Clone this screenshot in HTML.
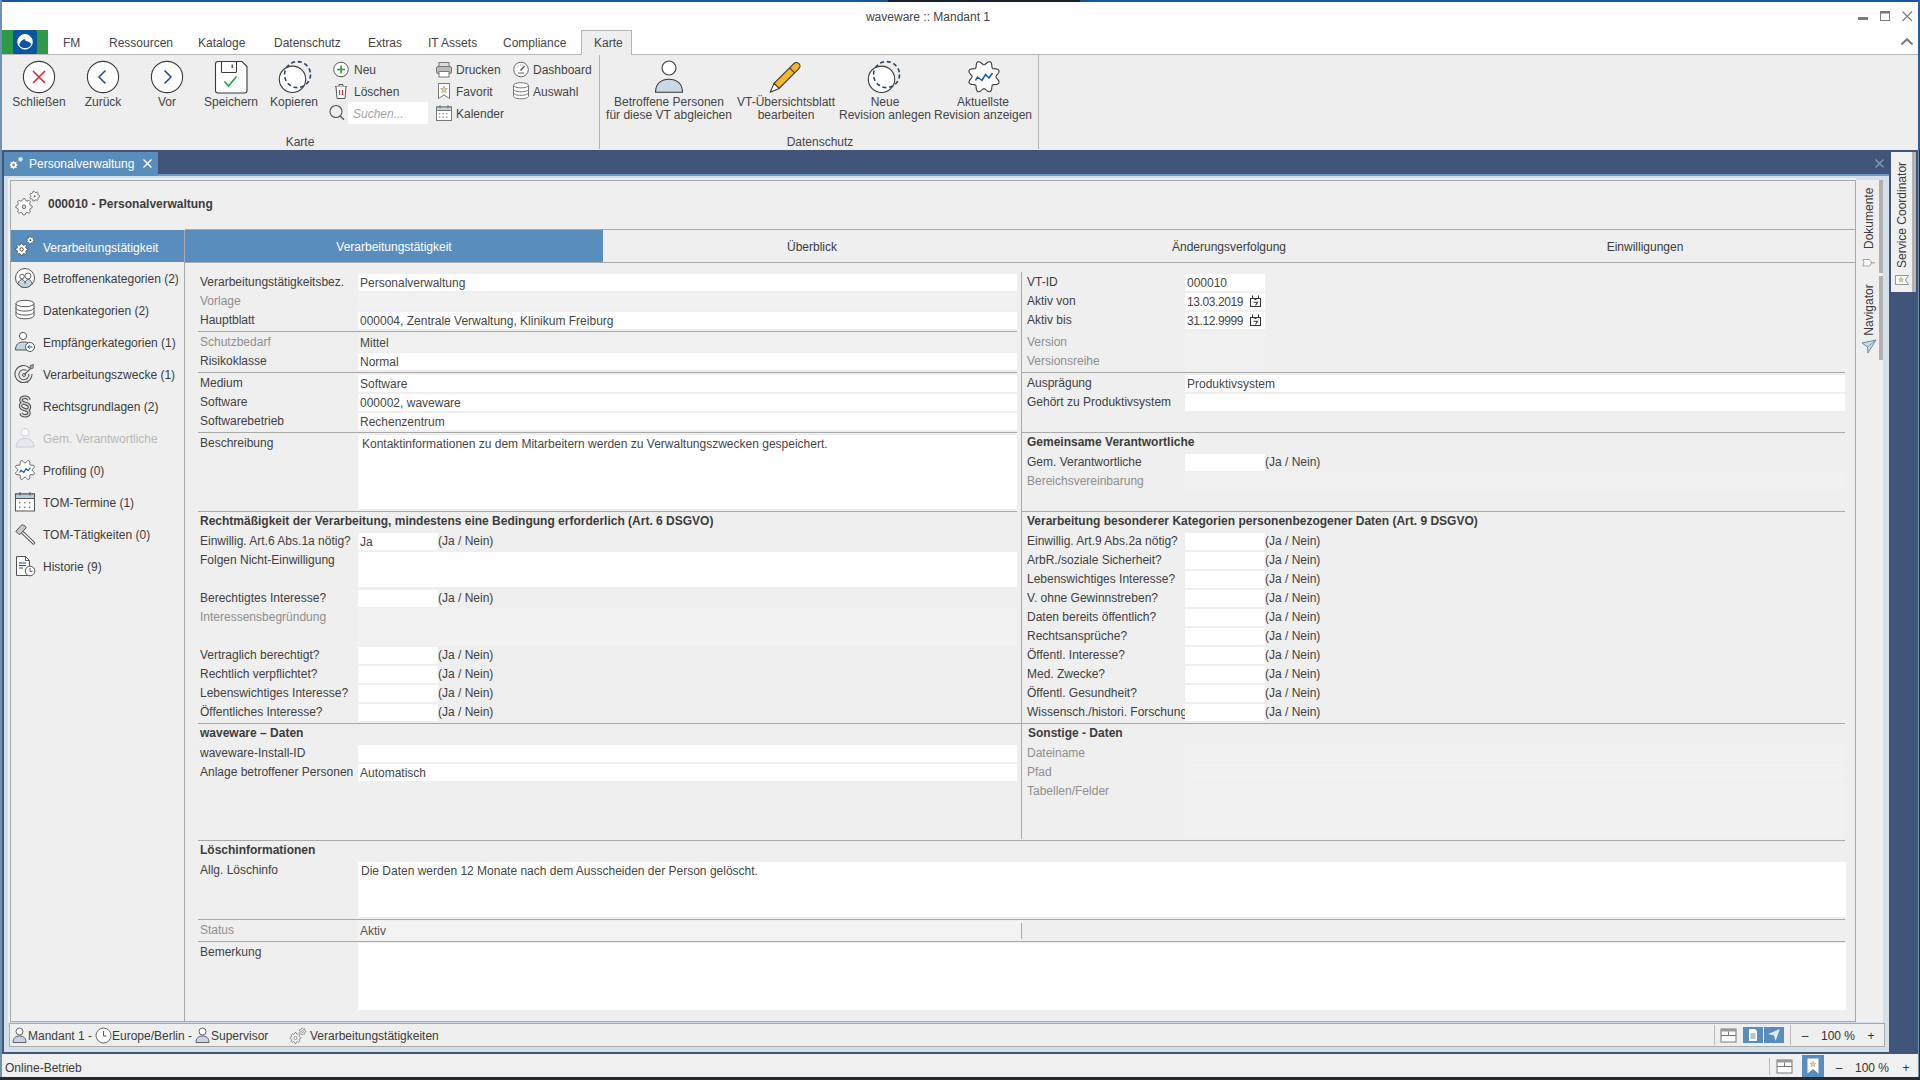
<!DOCTYPE html>
<html><head><meta charset="utf-8"><title>waveware</title>
<style>
html,body{margin:0;padding:0;}
body{width:1920px;height:1080px;position:relative;overflow:hidden;background:#efefef;font-family:"Liberation Sans",sans-serif;}
.a{position:absolute;}
.t{position:absolute;font-size:12px;line-height:14px;white-space:nowrap;color:#3b3b3b;}
.b{font-weight:bold;}
.dis{color:#8e8e8e;}
</style></head><body>
<div class="a" style="left:0px;top:0px;width:1920px;height:1080px;background:#41557a;"></div>
<div class="a" style="left:0px;top:0px;width:1920px;height:54px;background:#ffffff;"></div>
<div class="a" style="left:0px;top:54px;width:1920px;height:96px;background:#eeeeee;"></div>
<div class="a" style="left:0px;top:54px;width:1918px;height:1px;background:#b9b9b9;"></div>
<div class="a" style="left:0px;top:0px;width:1920px;height:2px;background:#1a5599;"></div>
<div class="a" style="left:888px;top:0px;width:192px;height:2px;background:#15202e;"></div>
<div class="a" style="left:1918px;top:0px;width:2px;height:150px;background:#1f60ae;"></div>
<div class="a" style="left:0px;top:0px;width:2px;height:1080px;background:#6e93b0;"></div>
<div class="a" style="left:1918px;top:150px;width:1px;height:930px;background:#7290a8;"></div>
<div class="a" style="left:1919px;top:150px;width:1px;height:930px;background:#1e2f3f;"></div>
<div class="a" style="left:4px;top:176px;width:1885px;height:876px;background:#d5dfe8;"></div>
<div class="a" style="left:8px;top:178px;width:3px;height:844px;background:#eef1ef;"></div>
<div class="a" style="left:8px;top:178px;width:1848px;height:2px;background:#eceff0;"></div>
<div class="a" style="left:158px;top:174px;width:1731px;height:2px;background:#6d9cc9;"></div>
<div class="a" style="left:10px;top:180px;width:1846px;height:842px;background:#efefef;box-sizing:border-box;border:1px solid #a9a9a9;"></div>
<div class="a" style="left:1856px;top:180px;width:27px;height:842px;background:#efefef;"></div>
<div class="a" style="left:9px;top:1023px;width:1876px;height:24px;background:#efefef;box-sizing:border-box;border:1px solid #a9a9a9;"></div>
<div class="a" style="left:2px;top:1052px;width:1916px;height:2px;background:#41557a;"></div>
<div class="a" style="left:2px;top:1054px;width:1916px;height:23px;background:#f0f0f0;"></div>
<div class="a" style="left:0px;top:1077px;width:1920px;height:3px;background:#262a30;"></div>
<div class="t " style="top:10px;left:628px;width:600px;text-align:center;color:#444;">waveware :: Mandant 1</div>
<div class="a" style="left:1858px;top:17px;width:10px;height:3px;background:#7a7a7a;"></div>
<svg class="a" style="left:1880px;top:11px;" width="11" height="11" viewBox="0 0 11 11"><rect x="0.5" y="0.5" width="9" height="9" fill="none" stroke="#7a7a7a" stroke-width="1"/><rect x="0.5" y="0.5" width="9" height="2" fill="#7a7a7a"/></svg>
<svg class="a" style="left:1902px;top:11px;" width="11" height="11" viewBox="0 0 11 11"><path d="M0.5 0.5L10 10M10 0.5L0.5 10" stroke="#7a7a7a" stroke-width="1.1"/></svg>
<svg class="a" style="left:1900px;top:37px;" width="14" height="9" viewBox="0 0 14 9"><path d="M1.5 7.5L7 2.2L12.5 7.5" stroke="#7a7a7a" stroke-width="2" fill="none"/></svg>
<div class="a" style="left:2px;top:30px;width:46px;height:24px;background:#2e9a46;"></div>
<div class="a" style="left:13px;top:30px;width:24px;height:24px;background:#0a55a0;border-radius:2px;"></div>
<svg class="a" style="left:13px;top:30px;" width="24" height="24" viewBox="0 0 24 24"><circle cx="12" cy="11.8" r="7.3" fill="#fff"/><path d="M6.3 15.2C6.8 12.2 8.8 9.6 11.2 9.3C12.6 9.1 13.2 10.6 12 11.2C13.8 10.6 15.6 11.8 18.6 14.2C17.6 16.4 15.6 18 13.2 18.1L12 18.1C9.5 18 7.3 16.9 6.3 15.2Z" fill="#0a55a0"/><circle cx="12" cy="11.8" r="7.3" fill="none" stroke="#fff" stroke-width="1"/></svg>
<div class="t " style="top:36px;left:63px;color:#444;">FM</div>
<div class="t " style="top:36px;left:109px;color:#444;">Ressourcen</div>
<div class="t " style="top:36px;left:198px;color:#444;">Kataloge</div>
<div class="t " style="top:36px;left:274px;color:#444;">Datenschutz</div>
<div class="t " style="top:36px;left:368px;color:#444;">Extras</div>
<div class="t " style="top:36px;left:428px;color:#444;">IT Assets</div>
<div class="t " style="top:36px;left:503px;color:#444;">Compliance</div>
<div class="a" style="left:581px;top:30px;width:51px;height:25px;background:#eeeeee;box-sizing:border-box;border:1px solid #b4b4b4;border-bottom:none;"></div>
<div class="t " style="top:36px;left:594px;color:#444;">Karte</div>
<div class="a" style="left:599px;top:55px;width:1px;height:94px;background:#b4b4b4;"></div>
<div class="a" style="left:1038px;top:55px;width:1px;height:94px;background:#b4b4b4;"></div>
<div class="t " style="top:135px;left:0px;width:600px;text-align:center;color:#444;">Karte</div>
<div class="t " style="top:135px;left:520px;width:600px;text-align:center;color:#444;">Datenschutz</div>
<div class="t " style="top:95px;left:-261px;width:600px;text-align:center;color:#444;">Schließen</div>
<div class="t " style="top:95px;left:-197px;width:600px;text-align:center;color:#444;">Zurück</div>
<div class="t " style="top:95px;left:-133px;width:600px;text-align:center;color:#444;">Vor</div>
<div class="t " style="top:95px;left:-69px;width:600px;text-align:center;color:#444;">Speichern</div>
<div class="t " style="top:95px;left:-6px;width:600px;text-align:center;color:#444;">Kopieren</div>
<svg class="a" style="left:22px;top:60px;" width="34" height="34" viewBox="0 0 34 34"><circle cx="17" cy="17" r="15.6" fill="#fff" stroke="#3a3a3a" stroke-width="1.1"/><path d="M11 11L23 23M23 11L11 23" stroke="#e3212b" stroke-width="1.5"/></svg>
<svg class="a" style="left:86px;top:60px;" width="34" height="34" viewBox="0 0 34 34"><circle cx="17" cy="17" r="15.6" fill="#fff" stroke="#3a3a3a" stroke-width="1.1"/><path d="M19.5 10.5L13 17L19.5 23.5" stroke="#1d4f8a" stroke-width="1.5" fill="none"/></svg>
<svg class="a" style="left:150px;top:60px;" width="34" height="34" viewBox="0 0 34 34"><circle cx="17" cy="17" r="15.6" fill="#fff" stroke="#3a3a3a" stroke-width="1.1"/><path d="M14.5 10.5L21 17L14.5 23.5" stroke="#1d4f8a" stroke-width="1.5" fill="none"/></svg>
<svg class="a" style="left:214px;top:60px;" width="34" height="34" viewBox="0 0 34 34"><path d="M1.5 4Q1.5 1.5 4 1.5H28L33 6.5V30.5Q33 33 30.5 33H4Q1.5 33 1.5 30.5Z" fill="#fff" stroke="#3a3a3a" stroke-width="1.1"/><path d="M7.5 1.5V11.5Q7.5 12.5 8.5 12.5H21.5Q22.5 12.5 22.5 11.5V1.5" fill="none" stroke="#3a3a3a" stroke-width="1.1"/><rect x="17.5" y="4.5" width="1.6" height="3.5" fill="#555"/><path d="M10.5 21.5L14.5 26L22.5 16.5" stroke="#1aa33a" stroke-width="1.5" fill="none"/></svg>
<svg class="a" style="left:277px;top:60px;" width="36" height="36" viewBox="0 0 36 36"><circle cx="15.5" cy="19.3" r="13.2" fill="#fff" stroke="#3a3a3a" stroke-width="1.1"/><circle cx="20.5" cy="14.6" r="13" fill="none" stroke="#23466e" stroke-width="1.6" stroke-dasharray="4 2.8"/></svg>
<div class="t " style="top:63px;left:354px;color:#444;">Neu</div>
<div class="t " style="top:85px;left:354px;color:#444;">Löschen</div>
<div class="a" style="left:348px;top:102px;width:80px;height:22px;background:#ffffff;"></div>
<div class="t " style="top:107px;left:353px;color:#a5a5a5;font-style:italic;">Suchen...</div>
<div class="t " style="top:63px;left:456px;color:#444;">Drucken</div>
<div class="t " style="top:85px;left:456px;color:#444;">Favorit</div>
<div class="t " style="top:107px;left:456px;color:#444;">Kalender</div>
<div class="t " style="top:63px;left:533px;color:#444;">Dashboard</div>
<div class="t " style="top:85px;left:533px;color:#444;">Auswahl</div>
<svg class="a" style="left:332px;top:61px;" width="18" height="18" viewBox="0 0 18 18"><circle cx="9" cy="8.5" r="7.3" fill="#fff" stroke="#555" stroke-width="1"/><path d="M9 4.5V12.5M5 8.5H13" stroke="#2a9a3a" stroke-width="1.6"/></svg>
<svg class="a" style="left:332px;top:82px;" width="18" height="18" viewBox="0 0 18 18"><path d="M3 4.5H15M7 4.5V2.5H11V4.5" stroke="#555" fill="none" stroke-width="1"/><path d="M4 4.5L5 16.5H13L14 4.5" fill="#fff" stroke="#555" stroke-width="1"/><path d="M7.5 8V13M10.5 8V13" stroke="#d0303a" stroke-width="1.2"/></svg>
<svg class="a" style="left:328px;top:104px;" width="20" height="20" viewBox="0 0 20 20"><circle cx="8" cy="7.5" r="6" fill="none" stroke="#555" stroke-width="1.1"/><path d="M12.3 12L16 15.8" stroke="#555" stroke-width="1.3"/></svg>
<svg class="a" style="left:435px;top:61px;" width="18" height="18" viewBox="0 0 18 18"><rect x="4" y="1.5" width="10" height="4" fill="#ddd" stroke="#777" stroke-width="1"/><rect x="1.5" y="5.5" width="15" height="7" rx="1.5" fill="#bbb" stroke="#777" stroke-width="1"/><rect x="4" y="10.5" width="10" height="5.5" fill="#fff" stroke="#777" stroke-width="1"/></svg>
<svg class="a" style="left:436px;top:82px;" width="18" height="18" viewBox="0 0 18 18"><path d="M2.5 1.5H13.5V16.5L8 13L2.5 16.5Z" fill="#fff" stroke="#777" stroke-width="1"/><path d="M8 4.2L9 6.6L11.4 6.7L9.5 8.2L10.2 10.6L8 9.3L5.8 10.6L6.5 8.2L4.6 6.7L7 6.6Z" fill="#e8d9a0" stroke="#9a8b50" stroke-width="0.6"/></svg>
<svg class="a" style="left:435px;top:104px;" width="18" height="18" viewBox="0 0 18 18"><rect x="1.5" y="3" width="15" height="13.5" fill="#fff" stroke="#777" stroke-width="1"/><rect x="1.5" y="3" width="15" height="3.5" fill="#c5d4e3" stroke="#777" stroke-width="1"/><path d="M5 1V4.5M13 1V4.5" stroke="#777" stroke-width="1"/><g fill="#888"><rect x="4" y="9" width="1.3" height="1.3"/><rect x="7.5" y="9" width="1.3" height="1.3"/><rect x="11" y="9" width="1.3" height="1.3"/><rect x="4" y="12.5" width="1.3" height="1.3"/><rect x="7.5" y="12.5" width="1.3" height="1.3"/><rect x="11" y="12.5" width="1.3" height="1.3"/></g></svg>
<svg class="a" style="left:512px;top:61px;" width="18" height="18" viewBox="0 0 18 18"><circle cx="9" cy="8.5" r="7.3" fill="#fff" stroke="#666" stroke-width="1"/><path d="M6 12H12" stroke="#666" stroke-width="1"/><path d="M8.5 9.5L12.5 5" stroke="#555" stroke-width="1.4"/><path d="M5 6.5A4.5 4.5 0 0 1 12 4.8" fill="none" stroke="#888" stroke-width="0.8" stroke-dasharray="1 1"/></svg>
<svg class="a" style="left:512px;top:82px;" width="18" height="18" viewBox="0 0 18 18"><path d="M1.5 3.3V14.2C1.5 15.6 4.8 16.8 9 16.8S16.5 15.6 16.5 14.2V3.3" fill="#fff" stroke="#777" stroke-width="1"/><path d="M1.5 7.2C1.5 8.6 4.8 9.8 9 9.8S16.5 8.6 16.5 7.2M1.5 10.7C1.5 12.1 4.8 13.3 9 13.3S16.5 12.1 16.5 10.7" fill="none" stroke="#777" stroke-width="1"/><ellipse cx="9" cy="3.3" rx="7.5" ry="2.6" fill="#fff" stroke="#777" stroke-width="1"/></svg>
<div class="t " style="top:95px;left:369px;width:600px;text-align:center;color:#444;">Betroffene Personen</div>
<div class="t " style="top:108px;left:369px;width:600px;text-align:center;color:#444;">für diese VT abgleichen</div>
<div class="t " style="top:95px;left:486px;width:600px;text-align:center;color:#444;">VT-Übersichtsblatt</div>
<div class="t " style="top:108px;left:486px;width:600px;text-align:center;color:#444;">bearbeiten</div>
<div class="t " style="top:95px;left:585px;width:600px;text-align:center;color:#444;">Neue</div>
<div class="t " style="top:108px;left:585px;width:600px;text-align:center;color:#444;">Revision anlegen</div>
<div class="t " style="top:95px;left:683px;width:600px;text-align:center;color:#444;">Aktuellste</div>
<div class="t " style="top:108px;left:683px;width:600px;text-align:center;color:#444;">Revision anzeigen</div>
<svg class="a" style="left:652px;top:58px;" width="34" height="36" viewBox="0 0 34 36"><circle cx="17" cy="10" r="7" fill="#fff" stroke="#3a3a3a" stroke-width="1.1"/><path d="M3.5 34.3C3.5 25.5 9.5 21.2 17 21.2S30.5 25.5 30.5 34.3Z" fill="#c9d9e6" stroke="#3a3a3a" stroke-width="1.1"/></svg>
<svg class="a" style="left:760px;top:54px;" width="44" height="44" viewBox="0 0 44 44"><g transform="translate(10.2,38.3) rotate(-45)"><path d="M9 -3.6H37A3.6 3.6 0 0 1 37 3.6H9Z" fill="#f7b52c" stroke="#3a3a3a" stroke-width="1.1"/><path d="M0 0L9 -3.6V3.6Z" fill="#fff" stroke="#3a3a3a" stroke-width="1.1" stroke-linejoin="round"/><path d="M31 -3.6V3.6" stroke="#3a3a3a" stroke-width="1.1"/></g></svg>
<svg class="a" style="left:866px;top:60px;" width="36" height="36" viewBox="0 0 36 36"><circle cx="15.5" cy="19.3" r="13.2" fill="#fff" stroke="#3a3a3a" stroke-width="1.1"/><circle cx="20.5" cy="14.6" r="13" fill="none" stroke="#23466e" stroke-width="1.6" stroke-dasharray="4 2.8"/></svg>
<svg class="a" style="left:966px;top:59px;" width="36" height="36" viewBox="0 0 36 36"><path d="M29.90 17.70L29.99 18.17L30.26 18.67L30.68 19.20L31.19 19.79L31.73 20.43L32.24 21.12L32.66 21.84L32.93 22.55L33.01 23.24L32.87 23.86L32.53 24.40L31.99 24.83L31.29 25.14L30.49 25.35L29.64 25.48L28.80 25.55L28.03 25.60L27.35 25.69L26.81 25.85L26.41 26.11L26.15 26.51L25.99 27.05L25.90 27.73L25.85 28.50L25.78 29.34L25.65 30.19L25.44 30.99L25.13 31.69L24.70 32.23L24.16 32.57L23.54 32.71L22.85 32.63L22.14 32.36L21.42 31.94L20.73 31.43L20.09 30.89L19.50 30.38L18.97 29.96L18.47 29.69L18.00 29.60L17.53 29.69L17.03 29.96L16.50 30.38L15.91 30.89L15.27 31.43L14.58 31.94L13.86 32.36L13.15 32.63L12.46 32.71L11.84 32.57L11.30 32.23L10.87 31.69L10.56 30.99L10.35 30.19L10.22 29.34L10.15 28.50L10.10 27.73L10.01 27.05L9.85 26.51L9.59 26.11L9.19 25.85L8.65 25.69L7.97 25.60L7.20 25.55L6.36 25.48L5.51 25.35L4.71 25.14L4.01 24.83L3.47 24.40L3.13 23.86L2.99 23.24L3.07 22.55L3.34 21.84L3.76 21.12L4.27 20.43L4.81 19.79L5.32 19.20L5.74 18.67L6.01 18.17L6.10 17.70L6.01 17.23L5.74 16.73L5.32 16.20L4.81 15.61L4.27 14.97L3.76 14.28L3.34 13.56L3.07 12.85L2.99 12.16L3.13 11.54L3.47 11.00L4.01 10.57L4.71 10.26L5.51 10.05L6.36 9.92L7.20 9.85L7.97 9.80L8.65 9.71L9.19 9.55L9.59 9.29L9.85 8.89L10.01 8.35L10.10 7.67L10.15 6.90L10.22 6.06L10.35 5.21L10.56 4.41L10.87 3.71L11.30 3.17L11.84 2.83L12.46 2.69L13.15 2.77L13.86 3.04L14.58 3.46L15.27 3.97L15.91 4.51L16.50 5.02L17.03 5.44L17.53 5.71L18.00 5.80L18.47 5.71L18.97 5.44L19.50 5.02L20.09 4.51L20.73 3.97L21.42 3.46L22.14 3.04L22.85 2.77L23.54 2.69L24.16 2.83L24.70 3.17L25.13 3.71L25.44 4.41L25.65 5.21L25.78 6.06L25.85 6.90L25.90 7.67L25.99 8.35L26.15 8.89L26.41 9.29L26.81 9.55L27.35 9.71L28.03 9.80L28.80 9.85L29.64 9.92L30.49 10.05L31.29 10.26L31.99 10.57L32.53 11.00L32.87 11.54L33.01 12.16L32.93 12.85L32.66 13.56L32.24 14.28L31.73 14.97L31.19 15.61L30.68 16.20L30.26 16.73L29.99 17.23Z" fill="#fff" stroke="#3a3a3a" stroke-width="1.1"/><path d="M9.5 21.5L11.5 18L16 21.5L19.5 15.5L23 19L26.5 14" stroke="#1d5a98" stroke-width="1.5" fill="none"/></svg>
<div class="a" style="left:4px;top:152px;width:154px;height:24px;background:#598dbe;"></div>
<svg class="a" style="left:8px;top:154px;" width="18" height="18" viewBox="0 0 18 18"><path d="M10.18 10.55L10.18 11.45L8.76 11.96L8.51 12.56L9.16 13.92L8.52 14.56L7.16 13.91L6.56 14.16L6.05 15.58L5.15 15.58L4.64 14.16L4.04 13.91L2.68 14.56L2.04 13.92L2.69 12.56L2.44 11.96L1.02 11.45L1.02 10.55L2.44 10.04L2.69 9.44L2.04 8.08L2.68 7.44L4.04 8.09L4.64 7.84L5.15 6.42L6.05 6.42L6.56 7.84L7.16 8.09L8.52 7.44L9.16 8.08L8.51 9.44L8.76 10.04Z" fill="#fff" stroke="#3a4a60" stroke-width="0.4"/><circle cx="5.6" cy="11" r="1.4" fill="#8a8a8a"/><path d="M15.08 5.01L15.08 5.59L14.20 5.89L14.02 6.26L14.34 7.14L13.88 7.50L13.09 7.00L12.70 7.09L12.21 7.88L11.64 7.75L11.54 6.82L11.23 6.57L10.30 6.68L10.05 6.16L10.71 5.50L10.71 5.10L10.05 4.44L10.30 3.92L11.23 4.03L11.54 3.78L11.64 2.85L12.21 2.72L12.70 3.51L13.09 3.60L13.88 3.10L14.34 3.46L14.02 4.34L14.20 4.71Z" fill="#dce8f4"/></svg>
<div class="t " style="top:157px;left:29px;color:#ffffff;">Personalverwaltung</div>
<svg class="a" style="left:142px;top:158px;" width="11" height="11" viewBox="0 0 11 11"><path d="M1.5 1.5L9.5 9.5M9.5 1.5L1.5 9.5" stroke="#fff" stroke-width="1.4"/></svg>
<svg class="a" style="left:1874px;top:158px;" width="11" height="11" viewBox="0 0 11 11"><path d="M1.5 1.5L9.5 9.5M9.5 1.5L1.5 9.5" stroke="#8a9ab5" stroke-width="1.3"/></svg>
<svg class="a" style="left:12px;top:188px;" width="32" height="30" viewBox="0 0 32 30"><path d="M20.16 18.00L20.16 19.60L18.12 20.66L17.64 21.82L18.34 24.00L17.20 25.14L15.02 24.44L13.86 24.92L12.80 26.96L11.20 26.96L10.14 24.92L8.98 24.44L6.80 25.14L5.66 24.00L6.36 21.82L5.88 20.66L3.84 19.60L3.84 18.00L5.88 16.94L6.36 15.78L5.66 13.60L6.80 12.46L8.98 13.16L10.14 12.68L11.20 10.64L12.80 10.64L13.86 12.68L15.02 13.16L17.20 12.46L18.34 13.60L17.64 15.78L18.12 16.94Z" fill="#fff" stroke="#666" stroke-width="0.9" stroke-linejoin="round"/><circle cx="12" cy="18.8" r="1.9" fill="#c8d4e0" stroke="#666" stroke-width="0.9"/><path d="M27.57 7.64L27.57 8.76L26.19 9.46L25.82 10.22L26.14 11.74L25.26 12.43L23.86 11.79L23.03 11.98L22.04 13.17L20.95 12.92L20.58 11.42L19.91 10.89L18.37 10.86L17.88 9.85L18.82 8.63L18.82 7.77L17.88 6.55L18.37 5.54L19.91 5.51L20.58 4.98L20.95 3.48L22.04 3.23L23.03 4.42L23.86 4.61L25.26 3.97L26.14 4.66L25.82 6.18L26.19 6.94Z" fill="#fff" stroke="#666" stroke-width="0.9" stroke-linejoin="round"/><circle cx="22.6" cy="8.2" r="1" fill="#666"/></svg>
<div class="t b" style="top:197px;left:48px;color:#3c3c3c;">000010 - Personalverwaltung</div>
<div class="a" style="left:11px;top:230px;width:173px;height:32px;background:#598dbe;"></div>
<div class="a" style="left:184px;top:230px;width:1px;height:791px;background:#a9a9a9;"></div>
<svg class="a" style="left:13px;top:234px;" width="24" height="24" viewBox="0 0 24 24"><path d="M14.77 14.79L14.77 16.01L13.00 16.74L12.66 17.57L13.39 19.33L12.53 20.19L10.77 19.46L9.94 19.80L9.21 21.57L7.99 21.57L7.26 19.80L6.43 19.46L4.67 20.19L3.81 19.33L4.54 17.57L4.20 16.74L2.43 16.01L2.43 14.79L4.20 14.06L4.54 13.23L3.81 11.47L4.67 10.61L6.43 11.34L7.26 11.00L7.99 9.23L9.21 9.23L9.94 11.00L10.77 11.34L12.53 10.61L13.39 11.47L12.66 13.23L13.00 14.06Z" fill="#fff" stroke="#3a3a3a" stroke-width="0.7" stroke-linejoin="round"/><circle cx="8.6" cy="15.4" r="1.7" fill="#fff" stroke="#3a3a3a" stroke-width="0.9"/><path d="M21.28 5.76L21.28 6.64L20.04 7.12L19.77 7.69L20.16 8.96L19.47 9.50L18.32 8.84L17.71 8.98L16.96 10.08L16.11 9.88L15.91 8.57L15.42 8.18L14.10 8.27L13.72 7.49L14.62 6.51L14.62 5.89L13.72 4.91L14.10 4.13L15.42 4.22L15.91 3.83L16.11 2.52L16.96 2.32L17.71 3.42L18.32 3.56L19.47 2.90L20.16 3.44L19.77 4.71L20.04 5.28Z" fill="#fff" stroke="#3a3a3a" stroke-width="0.6" stroke-linejoin="round"/><circle cx="17.4" cy="6.2" r="0.9" fill="#3a3a3a"/></svg>
<div class="t " style="top:241px;left:43px;color:#ffffff;">Verarbeitungstätigkeit</div>
<div class="t " style="top:272px;left:43px;color:#3b3b3b;white-space:pre;">Betroffenenkategorien (2)</div>
<div class="t " style="top:304px;left:43px;color:#3b3b3b;white-space:pre;">Datenkategorien (2)</div>
<div class="t " style="top:336px;left:43px;color:#3b3b3b;white-space:pre;">Empfängerkategorien (1)</div>
<div class="t " style="top:368px;left:43px;color:#3b3b3b;white-space:pre;">Verarbeitungszwecke (1)</div>
<div class="t " style="top:400px;left:43px;color:#3b3b3b;white-space:pre;">Rechtsgrundlagen (2)</div>
<div class="t " style="top:432px;left:43px;color:#b9b9b9;white-space:pre;">Gem. Verantwortliche</div>
<div class="t " style="top:464px;left:43px;color:#3b3b3b;white-space:pre;">Profiling (0)</div>
<div class="t " style="top:496px;left:43px;color:#3b3b3b;white-space:pre;">TOM-Termine (1)</div>
<div class="t " style="top:528px;left:43px;color:#3b3b3b;white-space:pre;">TOM-Tätigkeiten (0)</div>
<div class="t " style="top:560px;left:43px;color:#3b3b3b;white-space:pre;">Historie (9)</div>
<div class="a" style="left:185px;top:229px;width:1670px;height:1px;background:#a9a9a9;"></div>
<div class="a" style="left:185px;top:262px;width:1670px;height:1px;background:#a9a9a9;"></div>
<div class="a" style="left:185px;top:230px;width:418px;height:32px;background:#598dbe;"></div>
<div class="t " style="top:240px;left:94px;width:600px;text-align:center;color:#ffffff;">Verarbeitungstätigkeit</div>
<div class="t " style="top:240px;left:512px;width:600px;text-align:center;color:#3b3b3b;">Überblick</div>
<div class="t " style="top:240px;left:929px;width:600px;text-align:center;color:#3b3b3b;">Änderungsverfolgung</div>
<div class="t " style="top:240px;left:1345px;width:600px;text-align:center;color:#3b3b3b;">Einwilligungen</div>
<div class="t " style="top:275px;left:200px;color:#404040;">Verarbeitungstätigkeitsbez.</div>
<div class="a" style="left:358px;top:274px;width:659px;height:17px;background:#ffffff;"></div>
<div class="t " style="top:276px;left:360px;color:#464646;">Personalverwaltung</div>
<div class="t " style="top:294px;left:200px;color:#8e8e8e;">Vorlage</div>
<div class="a" style="left:358px;top:293px;width:659px;height:17px;background:#f1f1f1;"></div>
<div class="t " style="top:313px;left:200px;color:#404040;">Hauptblatt</div>
<div class="a" style="left:358px;top:312px;width:659px;height:17px;background:#ffffff;"></div>
<div class="t " style="top:314px;left:360px;color:#464646;">000004, Zentrale Verwaltung, Klinikum Freiburg</div>
<div class="a" style="left:198px;top:331px;width:819px;height:1px;background:#a9a9a9;"></div>
<div class="t " style="top:335px;left:200px;color:#8e8e8e;">Schutzbedarf</div>
<div class="a" style="left:358px;top:334px;width:659px;height:17px;background:#f1f1f1;"></div>
<div class="t " style="top:336px;left:360px;color:#464646;">Mittel</div>
<div class="t " style="top:354px;left:200px;color:#404040;">Risikoklasse</div>
<div class="a" style="left:358px;top:353px;width:659px;height:17px;background:#ffffff;"></div>
<div class="t " style="top:355px;left:360px;color:#464646;">Normal</div>
<div class="a" style="left:198px;top:372px;width:819px;height:1px;background:#a9a9a9;"></div>
<div class="t " style="top:376px;left:200px;color:#404040;">Medium</div>
<div class="a" style="left:358px;top:375px;width:659px;height:17px;background:#ffffff;"></div>
<div class="t " style="top:377px;left:360px;color:#464646;">Software</div>
<div class="t " style="top:395px;left:200px;color:#404040;">Software</div>
<div class="a" style="left:358px;top:394px;width:659px;height:17px;background:#ffffff;"></div>
<div class="t " style="top:396px;left:360px;color:#464646;">000002, waveware</div>
<div class="t " style="top:414px;left:200px;color:#404040;">Softwarebetrieb</div>
<div class="a" style="left:358px;top:413px;width:659px;height:17px;background:#ffffff;"></div>
<div class="t " style="top:415px;left:360px;color:#464646;">Rechenzentrum</div>
<div class="a" style="left:198px;top:432px;width:819px;height:1px;background:#a9a9a9;"></div>
<div class="t " style="top:436px;left:200px;color:#404040;">Beschreibung</div>
<div class="a" style="left:358px;top:435px;width:659px;height:74px;background:#ffffff;"></div>
<div class="t " style="top:437px;left:362px;color:#464646;">Kontaktinformationen zu dem Mitarbeitern werden zu Verwaltungszwecken gespeichert.</div>
<div class="a" style="left:198px;top:511px;width:819px;height:1px;background:#a9a9a9;"></div>
<div class="t b" style="top:514px;left:200px;color:#3b3b3b;">Rechtmäßigkeit der Verarbeitung, mindestens eine Bedingung erforderlich (Art. 6 DSGVO)</div>
<div class="t " style="top:534px;left:200px;color:#404040;">Einwillig. Art.6 Abs.1a nötig?</div>
<div class="a" style="left:358px;top:533px;width:80px;height:17px;background:#ffffff;"></div>
<div class="t " style="top:535px;left:360px;color:#464646;">Ja</div>
<div class="t " style="top:534px;left:438px;color:#404040;">(Ja / Nein)</div>
<div class="t " style="top:553px;left:200px;color:#404040;">Folgen Nicht-Einwilligung</div>
<div class="a" style="left:358px;top:552px;width:659px;height:35px;background:#ffffff;"></div>
<div class="t " style="top:591px;left:200px;color:#404040;">Berechtigtes Interesse?</div>
<div class="a" style="left:358px;top:590px;width:80px;height:17px;background:#ffffff;"></div>
<div class="t " style="top:591px;left:438px;color:#404040;">(Ja / Nein)</div>
<div class="t " style="top:610px;left:200px;color:#8e8e8e;">Interessensbegründung</div>
<div class="a" style="left:358px;top:608px;width:659px;height:38px;background:#f2f2f2;"></div>
<div class="t " style="top:648px;left:200px;color:#404040;">Vertraglich berechtigt?</div>
<div class="a" style="left:358px;top:647px;width:80px;height:17px;background:#ffffff;"></div>
<div class="t " style="top:648px;left:438px;color:#404040;">(Ja / Nein)</div>
<div class="t " style="top:667px;left:200px;color:#404040;">Rechtlich verpflichtet?</div>
<div class="a" style="left:358px;top:666px;width:80px;height:17px;background:#ffffff;"></div>
<div class="t " style="top:667px;left:438px;color:#404040;">(Ja / Nein)</div>
<div class="t " style="top:686px;left:200px;color:#404040;">Lebenswichtiges Interesse?</div>
<div class="a" style="left:358px;top:685px;width:80px;height:17px;background:#ffffff;"></div>
<div class="t " style="top:686px;left:438px;color:#404040;">(Ja / Nein)</div>
<div class="t " style="top:705px;left:200px;color:#404040;">Öffentliches Interesse?</div>
<div class="a" style="left:358px;top:704px;width:80px;height:17px;background:#ffffff;"></div>
<div class="t " style="top:705px;left:438px;color:#404040;">(Ja / Nein)</div>
<div class="a" style="left:198px;top:723px;width:823px;height:1px;background:#a9a9a9;"></div>
<div class="t b" style="top:726px;left:200px;color:#3b3b3b;">waveware – Daten</div>
<div class="t " style="top:746px;left:200px;color:#404040;">waveware-Install-ID</div>
<div class="a" style="left:358px;top:745px;width:659px;height:17px;background:#ffffff;"></div>
<div class="t " style="top:765px;left:200px;color:#404040;">Anlage betroffener Personen</div>
<div class="a" style="left:358px;top:764px;width:659px;height:17px;background:#ffffff;"></div>
<div class="t " style="top:766px;left:360px;color:#464646;">Automatisch</div>
<div class="a" style="left:1021px;top:272px;width:1px;height:567px;background:#a9a9a9;"></div>
<div class="t " style="top:275px;left:1027px;color:#404040;">VT-ID</div>
<div class="a" style="left:1185px;top:274px;width:80px;height:17px;background:#ffffff;"></div>
<div class="t " style="top:276px;left:1187px;color:#464646;">000010</div>
<div class="t " style="top:294px;left:1027px;color:#404040;">Aktiv von</div>
<div class="a" style="left:1185px;top:293px;width:80px;height:17px;background:#ffffff;"></div>
<div class="t " style="top:295px;left:1187px;color:#464646;letter-spacing:-0.4px;">13.03.2019</div>
<div class="t " style="top:313px;left:1027px;color:#404040;">Aktiv bis</div>
<div class="a" style="left:1185px;top:312px;width:80px;height:17px;background:#ffffff;"></div>
<div class="t " style="top:314px;left:1187px;color:#464646;letter-spacing:-0.4px;">31.12.9999</div>
<svg class="a" style="left:1250px;top:295px;" width="11" height="13" viewBox="0 0 11 13"><path d="M2.5 0.5V4.5M8.5 0.5V4.5" stroke="#333" stroke-width="1"/><rect x="0.5" y="3.5" width="10" height="8" fill="#fff" stroke="#333" stroke-width="1"/><rect x="4.5" y="3" width="2" height="2" fill="#333"/><path d="M3.5 7.2H7.5L5.5 10.5" stroke="#333" stroke-width="1.1" fill="none"/></svg>
<svg class="a" style="left:1250px;top:314px;" width="11" height="13" viewBox="0 0 11 13"><path d="M2.5 0.5V4.5M8.5 0.5V4.5" stroke="#333" stroke-width="1"/><rect x="0.5" y="3.5" width="10" height="8" fill="#fff" stroke="#333" stroke-width="1"/><rect x="4.5" y="3" width="2" height="2" fill="#333"/><path d="M3.5 7.2H7.5L5.5 10.5" stroke="#333" stroke-width="1.1" fill="none"/></svg>
<div class="t " style="top:335px;left:1027px;color:#8e8e8e;">Version</div>
<div class="a" style="left:1185px;top:334px;width:80px;height:17px;background:#f1f1f1;"></div>
<div class="t " style="top:354px;left:1027px;color:#8e8e8e;">Versionsreihe</div>
<div class="a" style="left:1185px;top:353px;width:80px;height:17px;background:#f1f1f1;"></div>
<div class="a" style="left:1021px;top:372px;width:824px;height:1px;background:#a9a9a9;"></div>
<div class="t " style="top:376px;left:1027px;color:#404040;">Ausprägung</div>
<div class="a" style="left:1185px;top:375px;width:660px;height:17px;background:#ffffff;"></div>
<div class="t " style="top:377px;left:1187px;color:#464646;">Produktivsystem</div>
<div class="t " style="top:395px;left:1027px;color:#404040;">Gehört zu Produktivsystem</div>
<div class="a" style="left:1185px;top:394px;width:660px;height:17px;background:#ffffff;"></div>
<div class="a" style="left:1021px;top:432px;width:824px;height:1px;background:#a9a9a9;"></div>
<div class="t b" style="top:435px;left:1027px;color:#3b3b3b;">Gemeinsame Verantwortliche</div>
<div class="t " style="top:455px;left:1027px;color:#404040;">Gem. Verantwortliche</div>
<div class="a" style="left:1185px;top:454px;width:80px;height:17px;background:#ffffff;"></div>
<div class="t " style="top:455px;left:1265px;color:#404040;">(Ja / Nein)</div>
<div class="t " style="top:474px;left:1027px;color:#8e8e8e;">Bereichsvereinbarung</div>
<div class="a" style="left:1185px;top:473px;width:660px;height:17px;background:#f1f1f1;"></div>
<div class="a" style="left:1021px;top:511px;width:824px;height:1px;background:#a9a9a9;"></div>
<div class="t b" style="top:514px;left:1027px;color:#3b3b3b;">Verarbeitung besonderer Kategorien personenbezogener Daten (Art. 9 DSGVO)</div>
<div class="t " style="top:534px;left:1027px;color:#404040;">Einwillig. Art.9 Abs.2a nötig?</div>
<div class="a" style="left:1185px;top:533px;width:80px;height:17px;background:#ffffff;"></div>
<div class="t " style="top:534px;left:1265px;color:#404040;">(Ja / Nein)</div>
<div class="t " style="top:553px;left:1027px;color:#404040;">ArbR./soziale Sicherheit?</div>
<div class="a" style="left:1185px;top:552px;width:80px;height:17px;background:#ffffff;"></div>
<div class="t " style="top:553px;left:1265px;color:#404040;">(Ja / Nein)</div>
<div class="t " style="top:572px;left:1027px;color:#404040;">Lebenswichtiges Interesse?</div>
<div class="a" style="left:1185px;top:571px;width:80px;height:17px;background:#ffffff;"></div>
<div class="t " style="top:572px;left:1265px;color:#404040;">(Ja / Nein)</div>
<div class="t " style="top:591px;left:1027px;color:#404040;">V. ohne Gewinnstreben?</div>
<div class="a" style="left:1185px;top:590px;width:80px;height:17px;background:#ffffff;"></div>
<div class="t " style="top:591px;left:1265px;color:#404040;">(Ja / Nein)</div>
<div class="t " style="top:610px;left:1027px;color:#404040;">Daten bereits öffentlich?</div>
<div class="a" style="left:1185px;top:609px;width:80px;height:17px;background:#ffffff;"></div>
<div class="t " style="top:610px;left:1265px;color:#404040;">(Ja / Nein)</div>
<div class="t " style="top:629px;left:1027px;color:#404040;">Rechtsansprüche?</div>
<div class="a" style="left:1185px;top:628px;width:80px;height:17px;background:#ffffff;"></div>
<div class="t " style="top:629px;left:1265px;color:#404040;">(Ja / Nein)</div>
<div class="t " style="top:648px;left:1027px;color:#404040;">Öffentl. Interesse?</div>
<div class="a" style="left:1185px;top:647px;width:80px;height:17px;background:#ffffff;"></div>
<div class="t " style="top:648px;left:1265px;color:#404040;">(Ja / Nein)</div>
<div class="t " style="top:667px;left:1027px;color:#404040;">Med. Zwecke?</div>
<div class="a" style="left:1185px;top:666px;width:80px;height:17px;background:#ffffff;"></div>
<div class="t " style="top:667px;left:1265px;color:#404040;">(Ja / Nein)</div>
<div class="t " style="top:686px;left:1027px;color:#404040;">Öffentl. Gesundheit?</div>
<div class="a" style="left:1185px;top:685px;width:80px;height:17px;background:#ffffff;"></div>
<div class="t " style="top:686px;left:1265px;color:#404040;">(Ja / Nein)</div>
<div class="t " style="top:705px;left:1027px;color:#404040;">Wissensch./histori. Forschung</div>
<div class="a" style="left:1185px;top:704px;width:80px;height:17px;background:#ffffff;"></div>
<div class="t " style="top:705px;left:1265px;color:#404040;">(Ja / Nein)</div>
<div class="a" style="left:1021px;top:723px;width:824px;height:1px;background:#a9a9a9;"></div>
<div class="t b" style="top:726px;left:1028px;color:#3b3b3b;">Sonstige - Daten</div>
<div class="t " style="top:746px;left:1027px;color:#8e8e8e;">Dateiname</div>
<div class="a" style="left:1185px;top:745px;width:660px;height:17px;background:#f1f1f1;"></div>
<div class="t " style="top:765px;left:1027px;color:#8e8e8e;">Pfad</div>
<div class="a" style="left:1185px;top:764px;width:660px;height:17px;background:#f1f1f1;"></div>
<div class="t " style="top:784px;left:1027px;color:#8e8e8e;">Tabellen/Felder</div>
<div class="a" style="left:1185px;top:783px;width:660px;height:55px;background:#f1f1f1;"></div>
<div class="a" style="left:198px;top:840px;width:1647px;height:1px;background:#a9a9a9;"></div>
<div class="t b" style="top:843px;left:200px;color:#3b3b3b;">Löschinformationen</div>
<div class="t " style="top:863px;left:200px;color:#404040;">Allg. Löschinfo</div>
<div class="a" style="left:358px;top:862px;width:1488px;height:55px;background:#ffffff;"></div>
<div class="t " style="top:864px;left:361px;color:#464646;">Die Daten werden 12 Monate nach dem Ausscheiden der Person gelöscht.</div>
<div class="a" style="left:198px;top:919px;width:1647px;height:1px;background:#a9a9a9;"></div>
<div class="t " style="top:923px;left:200px;color:#8e8e8e;">Status</div>
<div class="a" style="left:358px;top:921px;width:663px;height:19px;background:#f3f3f3;"></div>
<div class="t " style="top:924px;left:360px;color:#555;">Aktiv</div>
<div class="a" style="left:1021px;top:923px;width:1px;height:16px;background:#a9a9a9;"></div>
<div class="a" style="left:198px;top:941px;width:1647px;height:1px;background:#a9a9a9;"></div>
<div class="t " style="top:945px;left:200px;color:#404040;">Bemerkung</div>
<div class="a" style="left:358px;top:943px;width:1488px;height:67px;background:#ffffff;"></div>
<svg class="a" style="left:14px;top:267px;" width="22" height="22" viewBox="0 0 22 22"><circle cx="11" cy="11" r="9.5" fill="#fff" stroke="#555" stroke-width="1"/><path d="M4 16.5C5 13.5 7 12.5 8 12.5S11 13.5 11 16.5C11 13.5 13 12.5 14.5 12.5S17 13.5 18 16.5C16.5 19 14 20.5 11 20.5S5.5 19 4 16.5Z" fill="#c5d5e3" stroke="#555" stroke-width="0.9"/><circle cx="8" cy="9.5" r="2.3" fill="#fff" stroke="#555" stroke-width="0.9"/><circle cx="14" cy="9" r="3" fill="#fff" stroke="#555" stroke-width="0.9"/></svg>
<svg class="a" style="left:14px;top:299px;" width="22" height="22" viewBox="0 0 22 22"><path d="M2 4.5V16.5C2 18.3 6 19.8 11 19.8S20 18.3 20 16.5V4.5" fill="#fff" stroke="#555" stroke-width="1"/><path d="M2 8.8C2 10.6 6 12.1 11 12.1S20 10.6 20 8.8M2 12.8C2 14.6 6 16.1 11 16.1S20 14.6 20 12.8" fill="none" stroke="#555" stroke-width="1"/><ellipse cx="11" cy="4.5" rx="9" ry="3.2" fill="#fff" stroke="#555" stroke-width="1"/></svg>
<svg class="a" style="left:14px;top:331px;" width="22" height="22" viewBox="0 0 22 22"><circle cx="9" cy="5" r="3.6" fill="#fff" stroke="#555" stroke-width="1"/><path d="M1.5 19C1.5 13.5 4.5 11 9 11S15 12 16 14V19Z" fill="#c5d5e3" stroke="#555" stroke-width="1"/><circle cx="16" cy="16" r="4.5" fill="#fff" stroke="#555" stroke-width="1"/><path d="M18.3 16H13.8M15.6 14.2L13.8 16L15.6 17.8" stroke="#1d4f8a" stroke-width="1" fill="none"/></svg>
<svg class="a" style="left:14px;top:363px;" width="22" height="22" viewBox="0 0 22 22"><path d="M15.5 5A8.5 8.5 0 1 0 18 11" fill="none" stroke="#555" stroke-width="1.1"/><path d="M12.5 7.5A5 5 0 1 0 14.8 11" fill="none" stroke="#555" stroke-width="1.1"/><circle cx="10" cy="12" r="1.5" fill="none" stroke="#555" stroke-width="1"/><path d="M10.5 11.5L18 4" stroke="#555" stroke-width="1.1"/><path d="M16 2.5L19.5 1.5L18.8 5.5L16.5 5.8Z" fill="#aaa" stroke="#555" stroke-width="0.8"/><path d="M6 20L7 18.5M14 20L13 18.5" stroke="#555" stroke-width="1"/></svg>
<svg class="a" style="left:14px;top:392px;" width="22" height="26" viewBox="0 0 22 26"><path d="M15 8C14.5 6 13 5.2 11 5.2C8.5 5.2 7 6.5 7 8.3C7 10.5 9.5 11 11.5 11.5C14 12.2 15.5 13.2 15.5 15.2C15.5 16.8 14.5 17.5 13.5 18M7 21C7.5 23 9 23.8 11 23.8C13.5 23.8 15 22.5 15 20.7C15 18.5 12.5 18 10.5 17.5C8 16.8 6.5 15.8 6.5 13.8C6.5 12.2 7.5 11.5 8.5 11" fill="none" stroke="#444" stroke-width="3.4"/><path d="M15 8C14.5 6 13 5.2 11 5.2C8.5 5.2 7 6.5 7 8.3C7 10.5 9.5 11 11.5 11.5C14 12.2 15.5 13.2 15.5 15.2C15.5 16.8 14.5 17.5 13.5 18M7 21C7.5 23 9 23.8 11 23.8C13.5 23.8 15 22.5 15 20.7C15 18.5 12.5 18 10.5 17.5C8 16.8 6.5 15.8 6.5 13.8C6.5 12.2 7.5 11.5 8.5 11" fill="none" stroke="#dcdcdc" stroke-width="1.4"/></svg>
<svg class="a" style="left:14px;top:427px;" width="22" height="22" viewBox="0 0 22 22"><circle cx="11" cy="5.5" r="4" fill="#fff" stroke="#ccd" stroke-width="1"/><path d="M2 20C2 14 6 11.5 11 11.5S20 14 20 20Z" fill="#e3e9ef" stroke="#ccd" stroke-width="1"/></svg>
<svg class="a" style="left:14px;top:459px;" width="22" height="22" viewBox="0 0 22 22"><path d="M18.10 11.00L18.17 11.28L18.36 11.58L18.66 11.91L19.04 12.27L19.43 12.68L19.81 13.12L20.13 13.57L20.33 14.03L20.41 14.47L20.33 14.87L20.11 15.20L19.74 15.46L19.27 15.63L18.73 15.74L18.15 15.78L17.58 15.78L17.06 15.78L16.62 15.80L16.27 15.87L16.02 16.02L15.87 16.27L15.80 16.62L15.78 17.06L15.78 17.58L15.78 18.15L15.74 18.73L15.63 19.27L15.46 19.74L15.20 20.11L14.87 20.33L14.47 20.41L14.03 20.33L13.57 20.13L13.12 19.81L12.68 19.43L12.27 19.04L11.91 18.66L11.58 18.36L11.28 18.17L11.00 18.10L10.72 18.17L10.42 18.36L10.09 18.66L9.73 19.04L9.32 19.43L8.88 19.81L8.43 20.13L7.97 20.33L7.53 20.41L7.13 20.33L6.80 20.11L6.54 19.74L6.37 19.27L6.26 18.73L6.22 18.15L6.22 17.58L6.22 17.06L6.20 16.62L6.13 16.27L5.98 16.02L5.73 15.87L5.38 15.80L4.94 15.78L4.42 15.78L3.85 15.78L3.27 15.74L2.73 15.63L2.26 15.46L1.89 15.20L1.67 14.87L1.59 14.47L1.67 14.03L1.87 13.57L2.19 13.12L2.57 12.68L2.96 12.27L3.34 11.91L3.64 11.58L3.83 11.28L3.90 11.00L3.83 10.72L3.64 10.42L3.34 10.09L2.96 9.73L2.57 9.32L2.19 8.88L1.87 8.43L1.67 7.97L1.59 7.53L1.67 7.13L1.89 6.80L2.26 6.54L2.73 6.37L3.27 6.26L3.85 6.22L4.42 6.22L4.94 6.22L5.38 6.20L5.73 6.13L5.98 5.98L6.13 5.73L6.20 5.38L6.22 4.94L6.22 4.42L6.22 3.85L6.26 3.27L6.37 2.73L6.54 2.26L6.80 1.89L7.13 1.67L7.53 1.59L7.97 1.67L8.43 1.87L8.88 2.19L9.32 2.57L9.73 2.96L10.09 3.34L10.42 3.64L10.72 3.83L11.00 3.90L11.28 3.83L11.58 3.64L11.91 3.34L12.27 2.96L12.68 2.57L13.12 2.19L13.57 1.87L14.03 1.67L14.47 1.59L14.87 1.67L15.20 1.89L15.46 2.26L15.63 2.73L15.74 3.27L15.78 3.85L15.78 4.42L15.78 4.94L15.80 5.38L15.87 5.73L16.02 5.98L16.27 6.13L16.62 6.20L17.06 6.22L17.58 6.22L18.15 6.22L18.73 6.26L19.27 6.37L19.74 6.54L20.11 6.80L20.33 7.13L20.41 7.53L20.33 7.97L20.13 8.43L19.81 8.88L19.43 9.32L19.04 9.73L18.66 10.09L18.36 10.42L18.17 10.72Z" fill="#fff" stroke="#555" stroke-width="1"/><path d="M5.5 13.5L7 11.3L9.8 13.3L12 9.7L14 11.7L16.5 8.5" stroke="#1d5a98" stroke-width="1.2" fill="none"/></svg>
<svg class="a" style="left:14px;top:491px;" width="22" height="22" viewBox="0 0 22 22"><rect x="1.5" y="3" width="19" height="17" fill="#fff" stroke="#555" stroke-width="1"/><rect x="1.5" y="3" width="19" height="4.5" fill="#b8cde0" stroke="#555" stroke-width="1"/><path d="M6 1V4.5M16 1V4.5" stroke="#555" stroke-width="1"/><g fill="#777"><rect x="5" y="11" width="1.4" height="1.4"/><rect x="10" y="11" width="1.4" height="1.4"/><rect x="15" y="11" width="1.4" height="1.4"/><rect x="5" y="15.5" width="1.4" height="1.4"/><rect x="10" y="15.5" width="1.4" height="1.4"/><rect x="15" y="15.5" width="1.4" height="1.4"/></g></svg>
<svg class="a" style="left:14px;top:523px;" width="22" height="22" viewBox="0 0 22 22"><path d="M7.5 8.5L19.5 20" stroke="#555" stroke-width="3.2" stroke-linecap="round"/><path d="M7.5 8.5L19.5 20" stroke="#fff" stroke-width="1.2" stroke-linecap="round"/><path d="M1.8 8.5L7 2.5C8.5 1.5 10 1.8 11 3L12.2 4.8L6 11.5L4.5 10.8Z" fill="#c8c8c8" stroke="#555" stroke-width="1"/></svg>
<svg class="a" style="left:14px;top:555px;" width="22" height="22" viewBox="0 0 22 22"><path d="M2.5 1.5H11.5L15.5 5.5V20.5H2.5Z" fill="#fff" stroke="#555" stroke-width="1"/><path d="M11.5 1.5V5.5H15.5" fill="none" stroke="#555" stroke-width="1"/><path d="M5 8H12M5 10.5H12M5 13H9" stroke="#1d4f8a" stroke-width="1"/><circle cx="16" cy="16" r="4.8" fill="#fff" stroke="#555" stroke-width="1"/><path d="M16 13V16.3H18.5" stroke="#555" stroke-width="1" fill="none"/></svg>
<div class="a" style="left:1879px;top:180px;width:4px;height:93px;background:#b0b0b0;"></div>
<div class="a" style="left:1879px;top:276px;width:4px;height:84px;background:#b0b0b0;"></div>
<div class="t" style="left:1839px;top:212px;width:60px;text-align:center;transform:rotate(-90deg);color:#3b3b3b;">Dokumente</div>
<div class="t" style="left:1839px;top:303px;width:60px;text-align:center;transform:rotate(-90deg);color:#3b3b3b;">Navigator</div>
<svg class="a" style="left:1861px;top:256px;" width="15" height="12" viewBox="0 0 15 12"><path d="M2 3.5H8.5L10 5.5V8L8.5 10H2L3 6.5Z" fill="#fff" stroke="#999" stroke-width="0.9"/><path d="M10 6.8H14" stroke="#999" stroke-width="1"/></svg>
<svg class="a" style="left:1860px;top:338px;" width="18" height="18" viewBox="0 0 18 18"><path d="M2 5L16 2L8 15L7.5 9Z" fill="#c9dbe8" stroke="#6a8aa2" stroke-width="1"/><path d="M7.5 9L16 2" stroke="#6a8aa2" stroke-width="0.8"/></svg>
<div class="a" style="left:1891px;top:152px;width:21px;height:140px;background:#f0f0f0;"></div>
<div class="a" style="left:1912px;top:152px;width:4px;height:140px;background:#b4b4b4;"></div>
<div class="t" style="left:1849px;top:208px;width:106px;text-align:center;transform:rotate(-90deg);color:#3b3b3b;">Service Coordinator</div>
<svg class="a" style="left:1894px;top:274px;" width="16" height="12" viewBox="0 0 16 12"><path d="M1.5 1.5H14.5L11.5 6L14.5 10.5H1.5Z" fill="#fff" stroke="#888" stroke-width="0.9"/><path d="M7 3.3L7.7 5L9.5 5.1L8.1 6.2L8.6 8L7 7L5.4 8L5.9 6.2L4.5 5.1L6.3 5Z" fill="#e8d9a0" stroke="#9a8b50" stroke-width="0.5"/></svg>
<svg class="a" style="left:12px;top:1027px;" width="16" height="17" viewBox="0 0 16 17"><circle cx="7.5" cy="4.5" r="3.5" fill="#fff" stroke="#555" stroke-width="0.9"/><path d="M1 15.5C1 11 3.5 9 7.5 9S14 11 14 15.5Z" fill="#c5d5e3" stroke="#555" stroke-width="0.9"/></svg>
<div class="t " style="top:1029px;left:28px;color:#3b3b3b;">Mandant 1 -</div>
<svg class="a" style="left:95px;top:1027px;" width="17" height="17" viewBox="0 0 17 17"><circle cx="8.5" cy="8.5" r="7.5" fill="#fff" stroke="#555" stroke-width="0.9"/><path d="M8.5 4V9H11.5" stroke="#555" stroke-width="1" fill="none"/></svg>
<div class="t " style="top:1029px;left:112px;color:#3b3b3b;">Europe/Berlin -</div>
<svg class="a" style="left:195px;top:1027px;" width="16" height="17" viewBox="0 0 16 17"><circle cx="7.5" cy="4.5" r="3.5" fill="#fff" stroke="#555" stroke-width="0.9"/><path d="M1 15.5C1 11 3.5 9 7.5 9S14 11 14 15.5Z" fill="#c5d5e3" stroke="#555" stroke-width="0.9"/></svg>
<div class="t " style="top:1029px;left:211px;color:#3b3b3b;">Supervisor</div>
<svg class="a" style="left:289px;top:1027px;" width="18" height="17" viewBox="0 0 18 17"><path d="M11.97 10.46L11.97 11.54L10.33 12.16L10.03 12.89L10.75 14.49L9.99 15.25L8.39 14.53L7.66 14.83L7.04 16.47L5.96 16.47L5.34 14.83L4.61 14.53L3.01 15.25L2.25 14.49L2.97 12.89L2.67 12.16L1.03 11.54L1.03 10.46L2.67 9.84L2.97 9.11L2.25 7.51L3.01 6.75L4.61 7.47L5.34 7.17L5.96 5.53L7.04 5.53L7.66 7.17L8.39 7.47L9.99 6.75L10.75 7.51L10.03 9.11L10.33 9.84Z" fill="#fff" stroke="#777" stroke-width="0.8" stroke-linejoin="round"/><circle cx="6.5" cy="11" r="1.65" fill="none" stroke="#777" stroke-width="0.8"/><path d="M16.78 4.13L16.78 4.87L15.77 5.29L15.53 5.78L15.83 6.83L15.26 7.29L14.29 6.77L13.77 6.88L13.13 7.78L12.41 7.61L12.22 6.53L11.80 6.20L10.71 6.26L10.39 5.59L11.12 4.77L11.12 4.23L10.39 3.41L10.71 2.74L11.80 2.80L12.22 2.47L12.41 1.39L13.13 1.22L13.77 2.12L14.29 2.23L15.26 1.71L15.83 2.17L15.53 3.22L15.77 3.71Z" fill="#fff" stroke="#777" stroke-width="0.8" stroke-linejoin="round"/><circle cx="13.5" cy="4.5" r="0.99" fill="none" stroke="#777" stroke-width="0.8"/></svg>
<div class="t " style="top:1029px;left:310px;color:#3b3b3b;">Verarbeitungstätigkeiten</div>
<div class="a" style="left:1714px;top:1025px;width:1px;height:20px;background:#bbb;"></div>
<svg class="a" style="left:1720px;top:1028px;" width="17" height="15" viewBox="0 0 17 15"><rect x="1" y="1" width="15" height="13" fill="#fff" stroke="#777" stroke-width="1"/><rect x="1" y="1" width="15" height="2.5" fill="#999"/><path d="M1 7.5H16M8.5 3.5V7.5" stroke="#777" stroke-width="1"/></svg>
<div class="a" style="left:1743px;top:1027px;width:20px;height:16px;background:#598dbe;"></div>
<svg class="a" style="left:1746px;top:1028px;" width="14" height="14" viewBox="0 0 14 14"><path d="M3 1H9L11 3V13H3Z" fill="#fff"/><path d="M4.5 6H9.5M4.5 8H9.5M4.5 10H9.5" stroke="#598dbe" stroke-width="1"/></svg>
<div class="a" style="left:1764px;top:1027px;width:20px;height:16px;background:#598dbe;"></div>
<svg class="a" style="left:1766px;top:1028px;" width="16" height="14" viewBox="0 0 16 14"><path d="M2 6L14 1L9.5 13L8 7.5Z" fill="#dfe9f2"/></svg>
<div class="a" style="left:1790px;top:1025px;width:1px;height:20px;background:#bbb;"></div>
<div class="t " style="top:1029px;left:1505px;width:600px;text-align:center;color:#333;">–</div>
<div class="t " style="top:1029px;left:1538px;width:600px;text-align:center;color:#333;">100 %</div>
<div class="t " style="top:1029px;left:1571px;width:600px;text-align:center;color:#333;">+</div>
<div class="t " style="top:1061px;left:5px;color:#3b3b3b;">Online-Betrieb</div>
<div class="a" style="left:1769px;top:1058px;width:1px;height:17px;background:#bbb;"></div>
<svg class="a" style="left:1776px;top:1059px;" width="17" height="15" viewBox="0 0 17 15"><rect x="1" y="1" width="15" height="13" fill="#fff" stroke="#777" stroke-width="1"/><rect x="1" y="1" width="15" height="2.5" fill="#999"/><path d="M1 7.5H16M8.5 3.5V7.5" stroke="#777" stroke-width="1"/></svg>
<div class="a" style="left:1802px;top:1055px;width:22px;height:22px;background:#598dbe;"></div>
<svg class="a" style="left:1806px;top:1058px;" width="14" height="17" viewBox="0 0 14 17"><path d="M1.5 0.5H12.5V15.5L7 11L1.5 15.5Z" fill="#fff"/><path d="M7 3.3L7.8 5.2L9.8 5.3L8.3 6.6L8.8 8.6L7 7.5L5.2 8.6L5.7 6.6L4.2 5.3L6.2 5.2Z" fill="#e8d9a0" stroke="#9a8b50" stroke-width="0.5"/></svg>
<div class="t " style="top:1061px;left:1539px;width:600px;text-align:center;color:#333;">–</div>
<div class="t " style="top:1061px;left:1572px;width:600px;text-align:center;color:#333;">100 %</div>
<div class="t " style="top:1061px;left:1606px;width:600px;text-align:center;color:#333;">+</div>
</body></html>
